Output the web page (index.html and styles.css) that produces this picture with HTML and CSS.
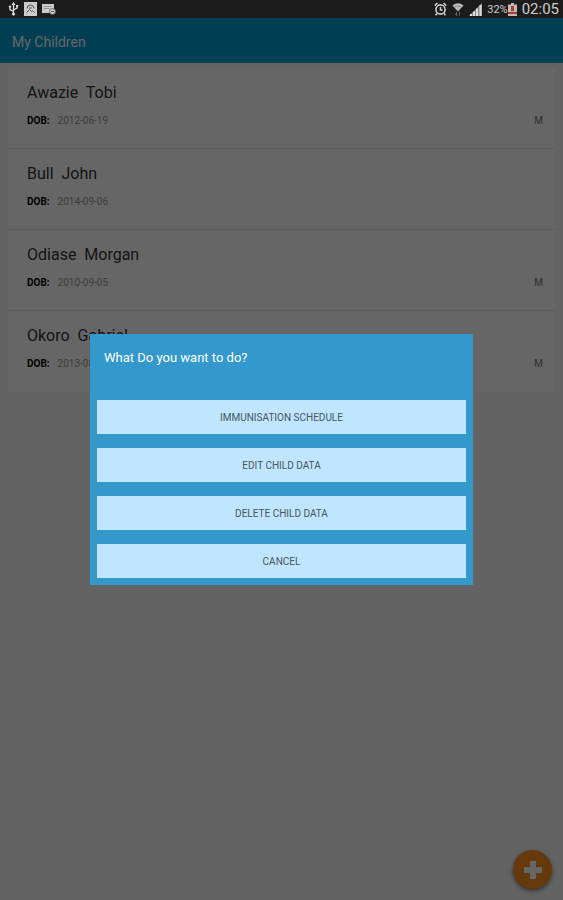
FILE: index.html
```html
<!DOCTYPE html>
<html lang="en">

<head>
    <meta charset="UTF-8">
    <meta name="viewport" content="width=device-width, initial-scale=1.0">
    <title>My Children</title>
    <link rel="stylesheet" href="styles.css">
</head>

<body>

    <div class="status">
        <div class="status-left">
            <svg width="11" height="14" viewBox="0 0 11 14" fill="none" stroke="#ddd" stroke-width="1.3">
                <path d="M5.5 2v10M5.5 9.5L2 7.5V5M5.5 8L9 6V4" />
                <path d="M5.5 0L7.5 3h-4z" fill="#ddd" stroke="none" />
                <circle cx="5.5" cy="12" r="1.6" fill="#ddd" stroke="none" />
                <circle cx="2" cy="4.6" r="1.2" fill="#ddd" stroke="none" />
                <path d="M8 3h2.200v2.200H8z" fill="#ddd" stroke="none" />
            </svg>
            <svg width="13" height="14" viewBox="0 0 13 14">
                <path d="M0 0h13v14H0z" fill="#ccc" />
                <path d="M3 6.500a3.500 3.500 0 0 1 7 0M2.500 10.500l3-3 2 2 1-1 2 2M5 6h3" fill="none" stroke="#555" />
            </svg>
            <svg width="14" height="12" viewBox="0 0 14 12">
                <path d="M0 1h12v9H0z" fill="#ccc" />
                <path d="M1.500 3.500h8M1.500 5.500h6" stroke="#888" stroke-width="0.8" />
                <circle cx="10.500" cy="8.500" r="3" fill="#ccc" stroke="#555" stroke-width="0.8" />
                <path d="M9 8.500h3" stroke="#555" />
            </svg>
        </div>
        <div class="status-right">
            <svg width="13" height="14" viewBox="0 0 13 14" fill="none" stroke="#ccc" stroke-width="1.6">
                <circle cx="6.500" cy="7.500" r="4.600" />
                <path d="M6.500 5v3h2M.8 3.600L3.500 1M12.200 3.600L9.500 1M3 11.500l-1.500 1.800M10 11.500l1.500 1.800" />
            </svg>
            <svg width="12" height="14" viewBox="0 0 12 14">
                <path d="M.5 3.500Q6 -.8 11.500 3.500L6 9.500z" fill="#bbb" />
                <path d="M2.500 5.200Q6 2.600 9.500 5.200" fill="none" stroke="#777" stroke-width="0.7" />
                <path d="M4.500 10v3.500M3 11.500L4.500 13.500M7.500 13.500V10" stroke="#666" fill="none" />
            </svg>
            <svg width="13" height="13" viewBox="0 0 13 13">
                <path d="M0 13L13 0v13z" fill="#888" />
                <path d="M1 11h2v2H1zM4 8.500h2V13H4zM7 5.500h2V13H7zM10.500 2h2V13h-2z" fill="#ddd" />
            </svg>
            <span class="battery">32%<svg width="9" height="13" viewBox="0 0 9 13">
                    <path d="M3 0h3v1.500h3v11.500H0V1.500h3z" fill="#bbb" />
                    <path d="M0 9h9v2H0z" fill="#b33a2c" />
                    <path d="M3 3h3v5H3z" fill="#b33a2c" />
                </svg></span>
            <span class="clock">02:05</span>
        </div>
    </div>

    <div class="screen">
        <header class="toolbar">
            <h1>My Children</h1>
        </header>

        <ul class="children">
            <li>
                <div class="name">Awazie  Tobi</div>
                <div class="info"><b>DOB:</b><span>2012-06-19</span><i>M</i></div>
            </li>
            <li>
                <div class="name">Bull  John</div>
                <div class="info"><b>DOB:</b><span>2014-09-06</span></div>
            </li>
            <li>
                <div class="name">Odiase  Morgan</div>
                <div class="info"><b>DOB:</b><span>2010-09-05</span><i>M</i></div>
            </li>
            <li>
                <div class="name">Okoro  Gabriel</div>
                <div class="info"><b>DOB:</b><span>2013-08-14</span><i>M</i></div>
            </li>
        </ul>

        <button class="add" type="button" aria-label="Add child">
            <svg width="18" height="18" viewBox="0 0 18 18">
                <path d="M6 0h6v6h6v6h-6v6H6v-6H0V6h6z" fill="#fff" />
            </svg>
        </button>

        <div class="overlay">
            <dialog class="menu" aria-labelledby="menu-title" open>
                <h2 id="menu-title">What Do you want to do?</h2>
                <div class="actions">
                    <button type="button">IMMUNISATION SCHEDULE</button>
                    <button type="button">EDIT CHILD DATA</button>
                    <button type="button">DELETE CHILD DATA</button>
                    <button type="button">CANCEL</button>
                </div>
            </dialog>
        </div>
    </div>

</body>

</html>
```
FILE: styles.css
```css
* {
    box-sizing: border-box;
}

body {
    margin: 0;
    min-height: 100vh;
    display: flex;
    flex-direction: column;
    font-family: Roboto, "Liberation Sans", sans-serif;
    background: #f7f7f7;
}

h1,
h2 {
    margin: 0;
    font-weight: 400;
}

.status {
    height: 18px;
    padding: 0 4px 0 8px;
    display: flex;
    justify-content: space-between;
    background: #1c1c1c;
    color: #ccc;
}

.status-left,
.status-right {
    display: flex;
    align-items: center;
    gap: 5px;
}

.battery {
    display: flex;
    align-items: center;
    font-size: 11px;
}

.clock {
    font-size: 15px;
}

.screen {
    position: relative;
    flex: 1;
}

.toolbar {
    height: 45px;
    padding: 2px 12px 0;
    display: flex;
    align-items: center;
    background: #009cd3;
    color: #fff;
}

.toolbar h1 {
    font-size: 14px;
}

.children {
    list-style: none;
    margin: 5px 8px;
    padding: 0;
    background: #fff;
}

.children li {
    height: 81px;
    padding: 15px 12px 0 19px;
    border-bottom: 1px solid #e8e8e8;
}

.children li:last-child {
    border-bottom: 0;
}

.name {
    font-size: 16px;
    line-height: 20px;
    white-space: pre;
    color: #333;
}

.info {
    display: flex;
    gap: 8px;
    margin-top: 10px;
    font-size: 10px;
    line-height: 16px;
    color: #999;
}

.info b {
    color: #000;
}

.info i {
    margin-left: auto;
    font-style: normal;
    color: #777;
}

.add {
    position: absolute;
    right: 11px;
    bottom: 11px;
    width: 39px;
    height: 39px;
    display: flex;
    align-items: center;
    justify-content: center;
    padding: 0;
    border: 0;
    border-radius: 50%;
    background: #ff9020;
    box-shadow: 0 2px 4px rgba(0, 0, 0, 0.5);
}

.overlay {
    position: absolute;
    inset: 0;
    display: flex;
    align-items: center;
    justify-content: center;
    background: rgba(0, 0, 0, 0.6);
}

.menu {
    position: static;
    width: 68%;
    margin: 0;
    padding: 0 7px 7px;
    border: 0;
    background: #3399cc;
    color: #fff;
}

.menu h2 {
    height: 66px;
    padding: 15px 7px 0;
    font-size: 13px;
    line-height: 18px;
}

.actions {
    display: grid;
    gap: 14px;
}

.actions button {
    height: 34px;
    padding: 2px 0 0;
    border: 0;
    background: #c0e5ff;
    color: #456;
    font-family: inherit;
    font-size: 10px;
}
```
